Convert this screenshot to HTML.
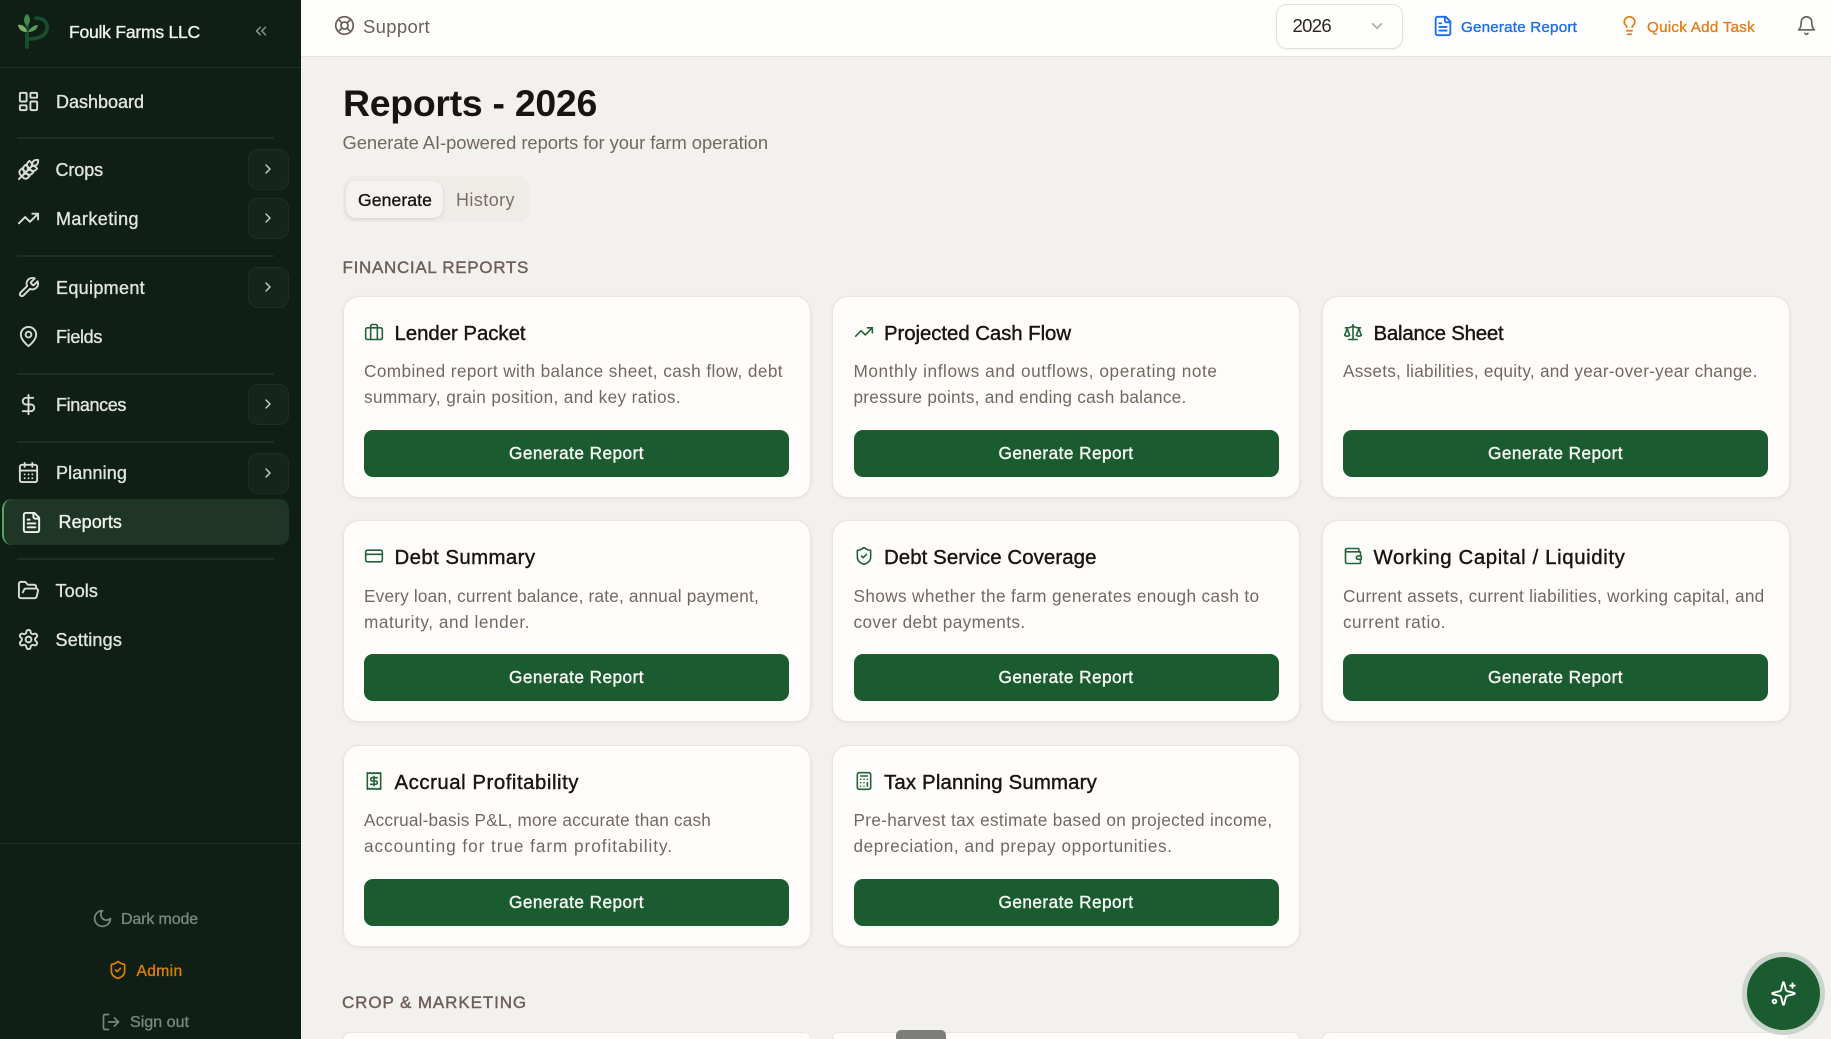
<!DOCTYPE html>
<html lang="en"><head><meta charset="utf-8"><title>Reports - 2026</title>
<style>
html,body{margin:0;padding:0;width:1831px;height:1039px;overflow:hidden;background:#f3f1ed;font-family:"Liberation Sans",sans-serif}
*{box-sizing:border-box}
#app{position:relative;width:1831px;height:1039px;overflow:hidden;background:#f3f1ed}
.t{position:absolute;white-space:nowrap;line-height:24px;height:24px}
.m{-webkit-text-stroke:.35px currentColor}
svg.i{position:absolute;fill:none;stroke:currentColor;stroke-width:2;stroke-linecap:round;stroke-linejoin:round;overflow:visible}
#side{position:absolute;left:0;top:0;width:301px;height:1039px;background:#0f1f15;color:#e2e5df}
.hr{position:absolute;left:17px;width:257px;height:1.5px;background:#1c2f23}
.nav{font-size:18px;left:56px;color:#e2e5df}
.ni{left:17px;width:23px;height:23px;color:#d9dcd6;stroke-width:1.8}
.cb{position:absolute;left:248px;width:41px;height:41px;border-radius:10px;background:#14261b;border:1.5px solid #1c3024}
.cb svg{left:11px;top:11px;width:16px;height:16px;color:#cfd3cd}
#top{position:absolute;left:301px;top:0;width:1530px;height:57px;background:#fefefd;border-bottom:1.5px solid #e6e3dd}
.card{position:absolute;width:468px;height:202px;background:#fefdfc;border:1.5px solid #e8e5de;border-radius:16px;box-shadow:0 1px 3px rgba(60,50,40,.08)}
.card svg{left:20.5px;top:25px;width:20px;height:20px;color:#1e6237;stroke-width:1.9}
.ct{left:51px;top:24.5px;font-size:20.4px;color:#1a1410;-webkit-text-stroke:.4px currentColor}
.d{left:20.5px;font-size:17.2px;color:#73685f}
.d1{top:62.2px}.d2{top:88.2px}
.b{position:absolute;left:20.5px;top:133px;width:425px;height:46.5px;border-radius:9px;background:#1a5c30;color:#f6f7f3;font-size:17.2px;line-height:47px;text-align:center;-webkit-text-stroke:.4px currentColor}
.b span{display:inline-block}
.s{font-size:17px;color:#6b5f57;-webkit-text-stroke:.4px currentColor}
.cut{height:7px;border-bottom:0;border-radius:16px 16px 0 0;box-shadow:none}
</style></head><body>
<div id="app">

<div id="side">
<svg style="position:absolute;left:0;top:0" width="60" height="60" fill="none">
<path d="M36 18C44 18 48 23 47 29C46 36 38 39 29 39" stroke="#17502c" stroke-width="3.6" stroke-linecap="round"/>
<path d="M27 26V47" stroke="#17502c" stroke-width="3.8" stroke-linecap="round"/>
<path d="M27 14C31 17 31 23 27 26C23 23 23 17 27 14Z" fill="#3f8a4a"/>
<path d="M18 25C22 24 26 27 27 32C22 32 19 30 18 25Z" fill="#7fb266"/>
<path d="M38 25C34 25 30 28 28 32C33 32 37 30 38 25Z" fill="#5f9c55"/>
</svg>
<div class="t m" style="left:69px;top:20px;font-size:17.6px;color:#f0f2ee" data-w="131">Foulk Farms LLC</div>
<svg class="i" viewBox="0 0 24 24" style="left:252px;top:22px;width:18px;height:18px;color:#8b978e"><path d="m11 17-5-5 5-5"/><path d="m18 17-5-5 5-5"/></svg>
<div class="hr" style="left:0;width:301px;top:66.5px"></div>

<svg class="i ni" viewBox="0 0 24 24" style="top:90px"><rect x="3" y="3" width="7" height="9" rx="1"/><rect x="14" y="3" width="7" height="5" rx="1"/><rect x="14" y="12" width="7" height="9" rx="1"/><rect x="3" y="16" width="7" height="5" rx="1"/></svg>
<div class="t m nav" style="top:90px" data-w="88">Dashboard</div>
<div class="hr" style="top:137px"></div>

<svg class="i ni" viewBox="0 0 24 24" style="top:158px"><path d="M2 22 16 8"/><path d="M3.47 12.53 5 11l1.53 1.53a3.5 3.5 0 0 1 0 4.94L5 19l-1.53-1.53a3.5 3.5 0 0 1 0-4.94Z"/><path d="M7.47 8.53 9 7l1.53 1.53a3.5 3.5 0 0 1 0 4.94L9 15l-1.53-1.53a3.5 3.5 0 0 1 0-4.94Z"/><path d="M11.47 4.53 13 3l1.53 1.53a3.5 3.5 0 0 1 0 4.94L13 11l-1.53-1.53a3.5 3.5 0 0 1 0-4.94Z"/><path d="M20 2h2v2a4 4 0 0 1-4 4h-2V6a4 4 0 0 1 4-4Z"/><path d="M11.47 17.47 13 19l-1.53 1.53a3.5 3.5 0 0 1-4.94 0L5 19l1.53-1.53a3.5 3.5 0 0 1 4.94 0Z"/><path d="M15.47 13.47 17 15l-1.53 1.53a3.5 3.5 0 0 1-4.94 0L9 15l1.53-1.53a3.5 3.5 0 0 1 4.94 0Z"/><path d="M19.47 9.47 21 11l-1.53 1.53a3.5 3.5 0 0 1-4.94 0L13 11l1.53-1.53a3.5 3.5 0 0 1 4.94 0Z"/></svg>
<div class="t m nav" style="top:158px;left:55.5px" data-w="47.5">Crops</div>
<div class="cb" style="top:149px"><svg class="i" viewBox="0 0 24 24"><path d="m9 18 6-6-6-6"/></svg></div>

<svg class="i ni" viewBox="0 0 24 24" style="top:207px"><polyline points="22 7 13.5 15.5 8.5 10.5 2 17"/><polyline points="16 7 22 7 22 13"/></svg>
<div class="t m nav" style="top:207px" data-w="83">Marketing</div>
<div class="cb" style="top:198px"><svg class="i" viewBox="0 0 24 24"><path d="m9 18 6-6-6-6"/></svg></div>
<div class="hr" style="top:255px"></div>

<svg class="i ni" viewBox="0 0 24 24" style="top:276px"><path d="M14.7 6.3a1 1 0 0 0 0 1.4l1.6 1.6a1 1 0 0 0 1.4 0l3.77-3.77a6 6 0 0 1-7.94 7.94l-6.91 6.91a2.12 2.12 0 0 1-3-3l6.91-6.91a6 6 0 0 1 7.94-7.94l-3.76 3.76z"/></svg>
<div class="t m nav" style="top:276px" data-w="89">Equipment</div>
<div class="cb" style="top:267px"><svg class="i" viewBox="0 0 24 24"><path d="m9 18 6-6-6-6"/></svg></div>

<svg class="i ni" viewBox="0 0 24 24" style="top:325px"><path d="M20 10c0 6-8 12-8 12s-8-6-8-12a8 8 0 0 1 16 0Z"/><circle cx="12" cy="10" r="3"/></svg>
<div class="t m nav" style="top:324.5px" data-w="46">Fields</div>
<div class="hr" style="top:373px"></div>

<svg class="i ni" viewBox="0 0 24 24" style="top:393px"><line x1="12" y1="2" x2="12" y2="22"/><path d="M17 5H9.5a3.5 3.5 0 0 0 0 7h5a3.5 3.5 0 0 1 0 7H6"/></svg>
<div class="t m nav" style="top:393px" data-w="70">Finances</div>
<div class="cb" style="top:384px"><svg class="i" viewBox="0 0 24 24"><path d="m9 18 6-6-6-6"/></svg></div>
<div class="hr" style="top:441px"></div>

<svg class="i ni" viewBox="0 0 24 24" style="top:461px"><path d="M8 2v4"/><path d="M16 2v4"/><rect x="3" y="4" width="18" height="18" rx="2"/><path d="M3 10h18"/><path d="M8 14h.01"/><path d="M12 14h.01"/><path d="M16 14h.01"/><path d="M8 18h.01"/><path d="M12 18h.01"/><path d="M16 18h.01"/></svg>
<div class="t m nav" style="top:461px" data-w="71">Planning</div>
<div class="cb" style="top:453px"><svg class="i" viewBox="0 0 24 24"><path d="m9 18 6-6-6-6"/></svg></div>

<div style="position:absolute;left:2px;top:499px;width:287px;height:46px;background:#1f3626;border-radius:10px;border-left:2.5px solid #4fa866"></div>
<svg class="i ni" viewBox="0 0 24 24" style="left:19.5px;top:510.5px;color:#f0f2ee"><path d="M15 2H6a2 2 0 0 0-2 2v16a2 2 0 0 0 2 2h12a2 2 0 0 0 2-2V7Z"/><path d="M14 2v4a2 2 0 0 0 2 2h4"/><path d="M10 9H8"/><path d="M16 13H8"/><path d="M16 17H8"/></svg>
<div class="t m nav" style="top:510px;left:58.5px;color:#f0f2ee" data-w="63.5">Reports</div>
<div class="hr" style="top:558px"></div>

<svg class="i ni" viewBox="0 0 24 24" style="top:579px"><path d="m6 14 1.5-2.9A2 2 0 0 1 9.24 10H20a2 2 0 0 1 1.94 2.5l-1.54 6a2 2 0 0 1-1.95 1.5H4a2 2 0 0 1-2-2V5a2 2 0 0 1 2-2h3.9a2 2 0 0 1 1.69.9l.81 1.2a2 2 0 0 0 1.67.9H18a2 2 0 0 1 2 2v2"/></svg>
<div class="t m nav" style="top:579px;left:55.5px" data-w="42.5">Tools</div>

<svg class="i ni" viewBox="0 0 24 24" style="top:628px"><path d="M12.22 2h-.44a2 2 0 0 0-2 2v.18a2 2 0 0 1-1 1.73l-.43.25a2 2 0 0 1-2 0l-.15-.08a2 2 0 0 0-2.73.73l-.22.38a2 2 0 0 0 .73 2.73l.15.1a2 2 0 0 1 1 1.72v.51a2 2 0 0 1-1 1.74l-.15.09a2 2 0 0 0-.73 2.73l.22.38a2 2 0 0 0 2.73.73l.15-.08a2 2 0 0 1 2 0l.43.25a2 2 0 0 1 1 1.73V20a2 2 0 0 0 2 2h.44a2 2 0 0 0 2-2v-.18a2 2 0 0 1 1-1.73l.43-.25a2 2 0 0 1 2 0l.15.08a2 2 0 0 0 2.73-.73l.22-.39a2 2 0 0 0-.73-2.73l-.15-.08a2 2 0 0 1-1-1.74v-.5a2 2 0 0 1 1-1.74l.15-.09a2 2 0 0 0 .73-2.73l-.22-.38a2 2 0 0 0-2.73-.73l-.15.08a2 2 0 0 1-2 0l-.43-.25a2 2 0 0 1-1-1.73V4a2 2 0 0 0-2-2z"/><circle cx="12" cy="12" r="3"/></svg>
<div class="t m nav" style="top:628px;left:55.5px" data-w="66.5">Settings</div>

<div class="hr" style="left:0;width:301px;top:842.5px"></div>

<svg class="i" viewBox="0 0 24 24" style="left:92px;top:908px;width:21px;height:21px;color:#79867c"><path d="M12 3a6 6 0 0 0 9 9 9 9 0 1 1-9-9Z"/></svg>
<div class="t m" style="left:121px;top:908px;font-size:16px;color:#79867c" data-w="77">Dark mode</div>
<svg class="i" viewBox="0 0 24 24" style="left:108px;top:960px;width:20px;height:20px;color:#e07f06"><path d="M20 13c0 5-3.5 7.5-7.66 8.95a1 1 0 0 1-.67-.01C7.5 20.5 4 18 4 13V6a1 1 0 0 1 1-1c2 0 4.5-1.2 6.24-2.72a1.17 1.17 0 0 1 1.52 0C14.51 3.81 17 5 19 5a1 1 0 0 1 1 1z"/><path d="m9 12 2 2 4-4"/></svg>
<div class="t m" style="left:136.5px;top:960px;font-size:15.6px;color:#e07f06" data-w="46">Admin</div>
<svg class="i" viewBox="0 0 24 24" style="left:101px;top:1012px;width:20px;height:20px;color:#79867c"><path d="M9 21H5a2 2 0 0 1-2-2V5a2 2 0 0 1 2-2h4"/><polyline points="16 17 21 12 16 7"/><line x1="21" y1="12" x2="9" y2="12"/></svg>
<div class="t m" style="left:130px;top:1011px;height:24px;font-size:16px;color:#79867c" data-w="59">Sign out</div>
</div>

<div id="top"></div>
<svg class="i" viewBox="0 0 24 24" style="left:334px;top:15px;width:21px;height:21px;color:#6b5f57"><circle cx="12" cy="12" r="10"/><path d="m4.93 4.93 4.24 4.24"/><path d="m14.83 9.17 4.24-4.24"/><path d="m14.83 14.83 4.24 4.24"/><path d="m9.17 14.83-4.24 4.24"/><circle cx="12" cy="12" r="4"/></svg>
<div class="t" style="left:363px;top:14.5px;font-size:18.5px;color:#6b5f57" data-w="67">Support</div>

<div style="position:absolute;left:1276px;top:3.5px;width:127px;height:45px;background:#fefefd;border:1.5px solid #e5e1d9;border-radius:11px;box-shadow:0 1px 2px rgba(60,50,40,.08)"></div>
<div class="t" style="left:1292.5px;top:14px;font-size:18.5px;color:#2a2522" data-w="38.5">2026</div>
<svg class="i" viewBox="0 0 24 24" style="left:1368px;top:17px;width:18px;height:18px;color:#a8a39c"><path d="m6 9 6 6 6-6"/></svg>

<svg class="i" viewBox="0 0 24 24" style="left:1431.5px;top:15px;width:22px;height:22px;color:#1a6cf0"><path d="M15 2H6a2 2 0 0 0-2 2v16a2 2 0 0 0 2 2h12a2 2 0 0 0 2-2V7Z"/><path d="M14 2v4a2 2 0 0 0 2 2h4"/><path d="M10 9H8"/><path d="M16 13H8"/><path d="M16 17H8"/></svg>
<div class="t m" style="left:1461px;top:15.5px;font-size:15.2px;color:#1a6cf0" data-w="116">Generate Report</div>
<svg class="i" viewBox="0 0 24 24" style="left:1618.5px;top:15px;width:21px;height:21px;color:#e07f1a"><path d="M15 14c.2-1 .7-1.7 1.5-2.5 1-.9 1.5-2.2 1.5-3.5A6 6 0 0 0 6 8c0 1 .2 2.2 1.5 3.5.7.7 1.3 1.5 1.5 2.5"/><path d="M9 18h6"/><path d="M10 22h4"/></svg>
<div class="t m" style="left:1647px;top:15.5px;font-size:15.2px;color:#e07f1a" data-w="108">Quick Add Task</div>
<svg class="i" viewBox="0 0 24 24" style="left:1796px;top:15px;width:21px;height:21px;color:#6b6560"><path d="M6 8a6 6 0 0 1 12 0c0 7 3 9 3 9H3s3-2 3-9"/><path d="M10.3 21a1.94 1.94 0 0 0 3.4 0"/></svg>

<div class="t" style="left:343px;top:81px;height:44px;line-height:44px;font-size:37.4px;font-weight:700;color:#1a1410" data-w="254">Reports - 2026</div>
<div class="t" style="left:342.5px;top:131px;font-size:18.4px;color:#73685f" data-w="425.5">Generate AI-powered reports for your farm operation</div>

<div style="position:absolute;left:343px;top:176px;width:187px;height:46px;border-radius:12px;background:#efece7"></div>
<div style="position:absolute;left:346px;top:181px;width:97px;height:37px;border-radius:10px;background:#f5f3ef;box-shadow:0 1px 3px rgba(60,50,40,.16)"></div>
<div class="t m" style="left:358px;top:188px;font-size:17.6px;color:#1a1410" data-w="74">Generate</div>
<div class="t" style="left:456px;top:188px;font-size:18px;color:#7a6f67" data-w="59">History</div>

<div class="t s" style="left:342.5px;top:255.5px" data-w="186.5">FINANCIAL REPORTS</div>

<div class="card" style="left:342.5px;top:296px">
<svg class="i" viewBox="0 0 24 24"><rect x="2" y="7" width="20" height="14" rx="2"/><path d="M16 21V5a2 2 0 0 0-2-2h-4a2 2 0 0 0-2 2v16"/></svg>
<div class="t ct" data-w="131">Lender Packet</div>
<div class="t d d1" data-w="419">Combined report with balance sheet, cash flow, debt</div>
<div class="t d d2" data-w="317">summary, grain position, and key ratios.</div>
<div class="b"><span data-w="135">Generate Report</span></div>
</div>

<div class="card" style="left:832px;top:296px">
<svg class="i" viewBox="0 0 24 24"><polyline points="22 7 13.5 15.5 8.5 10.5 2 17"/><polyline points="16 7 22 7 22 13"/></svg>
<div class="t ct" data-w="187">Projected Cash Flow</div>
<div class="t d d1" data-w="364">Monthly inflows and outflows, operating note</div>
<div class="t d d2" data-w="333">pressure points, and ending cash balance.</div>
<div class="b"><span data-w="135">Generate Report</span></div>
</div>

<div class="card" style="left:1321.5px;top:296px">
<svg class="i" viewBox="0 0 24 24"><path d="m16 16 3-8 3 8c-.87.65-1.92 1-3 1s-2.13-.35-3-1Z"/><path d="m2 16 3-8 3 8c-.87.65-1.92 1-3 1s-2.13-.35-3-1Z"/><path d="M7 21h10"/><path d="M12 3v18"/><path d="M3 7h2c2 0 5-1 7-2 2 1 5 2 7 2h2"/></svg>
<div class="t ct" data-w="130">Balance Sheet</div>
<div class="t d d1" data-w="414.5">Assets, liabilities, equity, and year-over-year change.</div>
<div class="b"><span data-w="135">Generate Report</span></div>
</div>

<div class="card" style="left:342.5px;top:520.4px">
<svg class="i" viewBox="0 0 24 24"><rect x="2" y="5" width="20" height="14" rx="2"/><line x1="2" y1="10" x2="22" y2="10"/></svg>
<div class="t ct" data-w="141">Debt Summary</div>
<div class="t d d1" data-w="395">Every loan, current balance, rate, annual payment,</div>
<div class="t d d2" data-w="166">maturity, and lender.</div>
<div class="b"><span data-w="135">Generate Report</span></div>
</div>

<div class="card" style="left:832px;top:520.4px">
<svg class="i" viewBox="0 0 24 24"><path d="M20 13c0 5-3.5 7.5-7.66 8.95a1 1 0 0 1-.67-.01C7.5 20.5 4 18 4 13V6a1 1 0 0 1 1-1c2 0 4.5-1.2 6.24-2.72a1.17 1.17 0 0 1 1.52 0C14.51 3.81 17 5 19 5a1 1 0 0 1 1 1z"/><path d="m9 12 2 2 4-4"/></svg>
<div class="t ct" data-w="212.5">Debt Service Coverage</div>
<div class="t d d1" data-w="406">Shows whether the farm generates enough cash to</div>
<div class="t d d2" data-w="172">cover debt payments.</div>
<div class="b"><span data-w="135">Generate Report</span></div>
</div>

<div class="card" style="left:1321.5px;top:520.4px">
<svg class="i" viewBox="0 0 24 24"><path d="M19 7V4a1 1 0 0 0-1-1H5a2 2 0 0 0 0 4h15a1 1 0 0 1 1 1v4h-3a2 2 0 0 0 0 4h3a1 1 0 0 0 1-1v-2a1 1 0 0 0-1-1"/><path d="M3 5v14a2 2 0 0 0 2 2h15a1 1 0 0 0 1-1v-4"/></svg>
<div class="t ct" data-w="252">Working Capital / Liquidity</div>
<div class="t d d1" data-w="421.5">Current assets, current liabilities, working capital, and</div>
<div class="t d d2" data-w="103">current ratio.</div>
<div class="b"><span data-w="135">Generate Report</span></div>
</div>

<div class="card" style="left:342.5px;top:745.2px">
<svg class="i" viewBox="0 0 24 24"><path d="M4 2v20l2-1 2 1 2-1 2 1 2-1 2 1 2-1 2 1V2l-2 1-2-1-2 1-2-1-2 1-2-1-2 1Z"/><path d="M16 8h-6a2 2 0 1 0 0 4h4a2 2 0 1 1 0 4H8"/><path d="M12 17.5v-11"/></svg>
<div class="t ct" data-w="184.5">Accrual Profitability</div>
<div class="t d d1" data-w="347">Accrual-basis P&amp;L, more accurate than cash</div>
<div class="t d d2" data-w="309">accounting for true farm profitability.</div>
<div class="b"><span data-w="135">Generate Report</span></div>
</div>

<div class="card" style="left:832px;top:745.2px">
<svg class="i" viewBox="0 0 24 24"><rect x="4" y="2" width="16" height="20" rx="2"/><line x1="8" y1="6" x2="16" y2="6"/><line x1="16" y1="14" x2="16" y2="18"/><path d="M16 10h.01"/><path d="M12 10h.01"/><path d="M8 10h.01"/><path d="M12 14h.01"/><path d="M8 14h.01"/><path d="M12 18h.01"/><path d="M8 18h.01"/></svg>
<div class="t ct" data-w="213">Tax Planning Summary</div>
<div class="t d d1" data-w="419">Pre-harvest tax estimate based on projected income,</div>
<div class="t d d2" data-w="319">depreciation, and prepay opportunities.</div>
<div class="b"><span data-w="135">Generate Report</span></div>
</div>

<div class="t s" style="left:342px;top:991px" data-w="185">CROP &amp; MARKETING</div>

<div class="card cut" style="left:342.5px;top:1032px"></div>
<div class="card cut" style="left:832px;top:1032px"></div>
<div class="card cut" style="left:1321.5px;top:1032px"></div>

<div style="position:absolute;left:896px;top:1030px;width:50px;height:9px;border-radius:5px 5px 0 0;background:#7c7c7a"></div>

<div style="position:absolute;left:1742px;top:952px;width:83px;height:83px;border-radius:50%;background:#c9d5ca"></div>
<div style="position:absolute;left:1747px;top:957px;width:73px;height:73px;border-radius:50%;background:#1a5c30"></div>
<svg class="i" viewBox="0 0 24 24" style="left:1769.5px;top:979.5px;width:27px;height:27px;color:#fff;stroke-width:1.7"><path d="M9.937 15.5A2 2 0 0 0 8.5 14.063l-6.135-1.582a.5.5 0 0 1 0-.962L8.5 9.936A2 2 0 0 0 9.937 8.5l1.582-6.135a.5.5 0 0 1 .963 0L14.063 8.5A2 2 0 0 0 15.5 9.937l6.135 1.581a.5.5 0 0 1 0 .964L15.5 14.063a2 2 0 0 0-1.437 1.437l-1.582 6.135a.5.5 0 0 1-.963 0z"/><path d="M20 3v4"/><path d="M22 5h-4"/><circle cx="4" cy="19" r="1.6"/></svg>

</div>
<script>
document.querySelectorAll('[data-w]').forEach(function(e){
  var w=parseFloat(e.getAttribute('data-w'));
  e.style.letterSpacing='0px';
  var c=e.getBoundingClientRect().width,n=e.textContent.length;
  e.style.letterSpacing=((w-c)/n).toFixed(3)+'px';
});
</script>
</body></html>
